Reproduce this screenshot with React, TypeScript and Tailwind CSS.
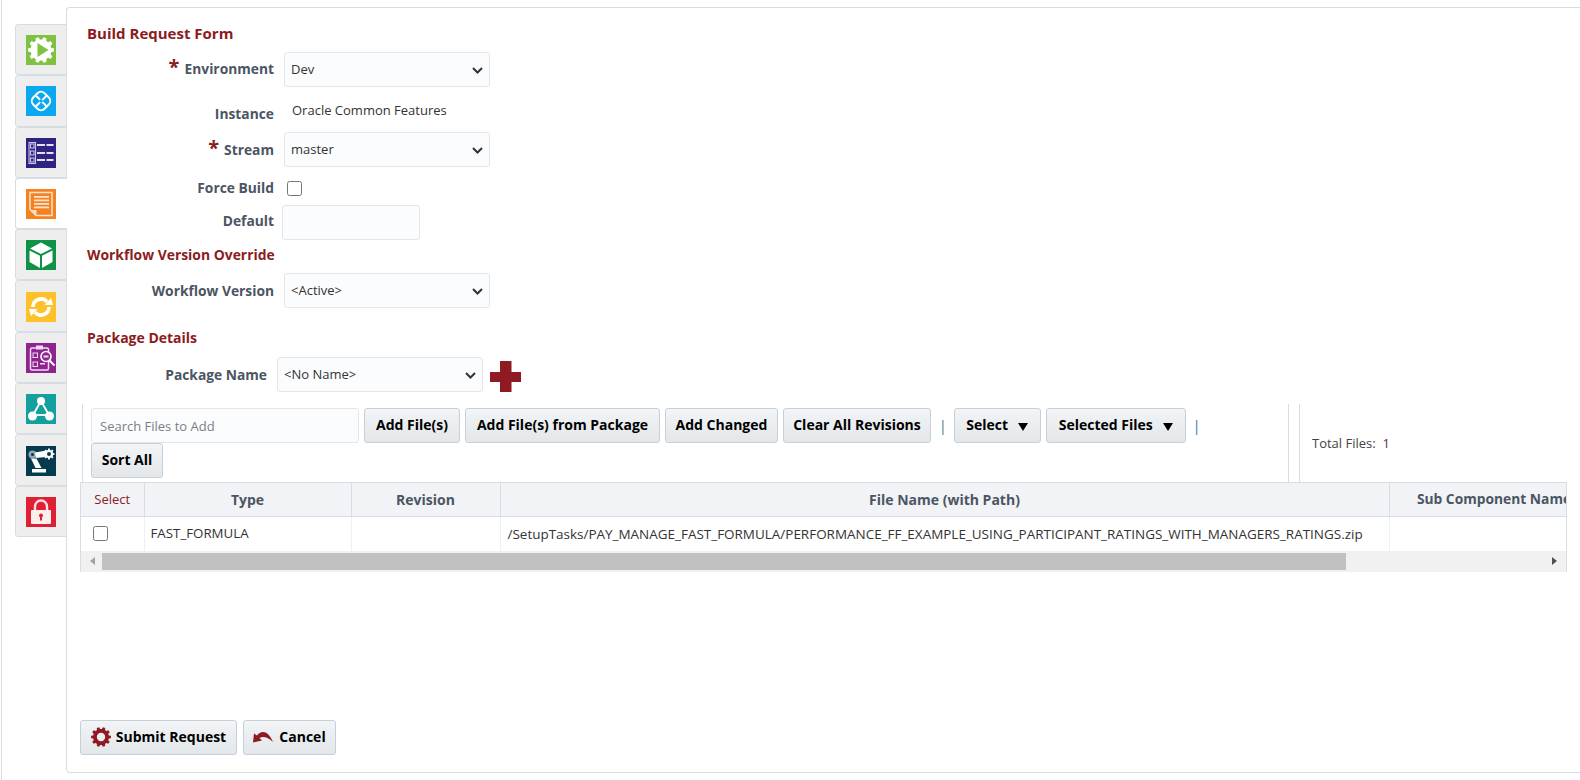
import type { ReactNode } from "react";

const FONT = "font-['Open_Sans','Noto_Sans',sans-serif]";

function gearPath(cx: number, cy: number, outer: number, inner: number, teeth: number) {
    const pts: string[] = [];
    const step = (Math.PI * 2) / teeth;
    for (let i = 0; i < teeth; i++) {
        const a = i * step;
        const list = [
            [a - step * 0.2, outer],
            [a + step * 0.2, outer],
            [a + step * 0.32, inner],
            [a + step * 0.68, inner],
        ];
        for (const [ang, r] of list) {
            pts.push(`${(cx + Math.cos(ang) * r).toFixed(2)} ${(cy + Math.sin(ang) * r).toFixed(2)}`);
        }
    }
    return "M" + pts.join("L") + "Z";
}

function IconBox({ bg, children }: { bg: string; children: ReactNode }) {
    return (
        <svg width="30" height="30" viewBox="0 0 30 30" className="block" style={{ background: bg }}>
            {children}
        </svg>
    );
}

const tabs: { key: string; active?: boolean; icon: ReactNode }[] = [
    {
        key: "run",
        icon: (
            <IconBox bg="#7fc241">
                <path d={gearPath(15, 15, 13, 10.5, 10)} fill="#fff" />
                <path d="M11.5 8 22.500 15 11.5 22z" fill="#7fc241" />
            </IconBox>
        ),
    },
    {
        key: "flow",
        icon: (
            <IconBox bg="#0aa9ef">
                <g fill="none" stroke="#fff" strokeWidth="2" strokeLinejoin="round">
                    <rect x="7" y="7" width="16" height="16" rx="5" transform="rotate(45 15 15)" />
                    <path d="M9.500 9.500C13 12 13 13 15 15s3 2 5.500 5.500" />
                    <path d="M20.500 9.500C18 13 17 13 15 15s-2 3-5.500 5.500" />
                </g>
                <circle cx="15" cy="15" r="1.800" fill="#0aa9ef" />
            </IconBox>
        ),
    },
    {
        key: "list",
        icon: (
            <IconBox bg="#2e2381">
                <g fill="none" stroke="#c9c3ea" strokeWidth="1.100">
                    <rect x="3" y="4.500" width="6.500" height="21" />
                    <rect x="4.500" y="6" width="3.500" height="4" />
                    <rect x="4.500" y="13" width="3.500" height="4" />
                    <rect x="4.500" y="20" width="3.500" height="4" />
                </g>
                <g fill="#e4e1f5">
                    <rect x="11" y="6" width="8" height="2" />
                    <rect x="20.500" y="6" width="7" height="2" />
                    <rect x="11" y="14" width="8" height="2" />
                    <rect x="20.500" y="14" width="7" height="2" />
                    <rect x="11" y="21" width="8" height="2" />
                    <rect x="20.500" y="21" width="7" height="2" />
                </g>
            </IconBox>
        ),
    },
    {
        key: "doc",
        active: true,
        icon: (
            <IconBox bg="#f58220">
                <path d="M4 3.500h22v23H10l-6-6z" fill="none" stroke="#fde3cb" strokeWidth="1.500" />
                <path d="M5 21h5.500v5z" fill="#fde3cb" />
                <g fill="#fde3cb">
                    <rect x="8" y="7" width="15" height="1.800" />
                    <rect x="8" y="10.500" width="15" height="1.800" />
                    <rect x="8" y="14" width="15" height="1.800" />
                    <rect x="8" y="17.500" width="15" height="1.800" />
                </g>
            </IconBox>
        ),
    },
    {
        key: "box",
        icon: (
            <IconBox bg="#0f9247">
                <path d="M15 2.500 26 8.500 15 14 4 8.500z" fill="#fff" />
                <path d="M3.500 10.500 14 15.800V28L3.500 22z" fill="#fff" />
                <path d="M26.500 10.500 16 15.800V28l10.500-6z" fill="#fff" />
            </IconBox>
        ),
    },
    {
        key: "sync",
        icon: (
            <IconBox bg="#fdc12a">
                <g fill="none" stroke="#fff" strokeWidth="3.600">
                    <path d="M7 15a8 8 0 0 1 14-5.300" />
                    <path d="M23 15a8 8 0 0 1-14 5.300" />
                </g>
                <path d="M18.500 13h8.500l-2-7z" fill="#fff" />
                <path d="M11.500 17H3l2 7z" fill="#fff" />
            </IconBox>
        ),
    },
    {
        key: "audit",
        icon: (
            <IconBox bg="#8e2490">
                <rect x="4.500" y="5" width="18" height="22" rx="1.500" fill="none" stroke="#f3dcf3" strokeWidth="1.500" />
                <rect x="10" y="2.500" width="7" height="4" fill="#f3dcf3" />
                <rect x="7" y="10" width="4.500" height="4.500" fill="none" stroke="#f3dcf3" />
                <rect x="7" y="19" width="4.500" height="4.500" fill="none" stroke="#f3dcf3" />
                <rect x="14" y="20" width="5" height="1.500" fill="#f3dcf3" />
                <circle cx="20" cy="13.500" r="5" fill="#8e2490" stroke="#fff" strokeWidth="1.600" />
                <rect x="17.500" y="12.500" width="5" height="2" fill="#f3dcf3" />
                <path d="m23.500 17.500 5 5" stroke="#fff" strokeWidth="2" />
            </IconBox>
        ),
    },
    {
        key: "graph",
        icon: (
            <IconBox bg="#14a09c">
                <g stroke="#fff" strokeWidth="1.800" fill="none">
                    <path d="M15 7 7 21" />
                    <path d="M15 7 23 21" />
                    <path d="M11 21h9" />
                </g>
                <circle cx="15" cy="7" r="4" fill="#fff" />
                <circle cx="6.500" cy="22" r="4.500" fill="#fff" />
                <circle cx="23.500" cy="22" r="4.500" fill="#fff" />
            </IconBox>
        ),
    },
    {
        key: "robot",
        icon: (
            <IconBox bg="#053b4f">
                <circle cx="6.500" cy="8.500" r="4" fill="#8fa7b0" />
                <circle cx="6.500" cy="8.500" r="1.500" fill="#053b4f" />
                <path d="M9 6.500 20 4.500V11L10 12z" fill="#fff" />
                <path d={gearPath(23, 8, 5.500, 4.200, 8)} fill="#fff" />
                <circle cx="23" cy="8" r="2" fill="#053b4f" />
                <path d="M5 12.500h5.500L15.500 22h-6z" fill="#fff" />
                <rect x="6" y="23" width="14" height="3.500" fill="#fff" />
            </IconBox>
        ),
    },
    {
        key: "lock",
        icon: (
            <IconBox bg="#de2032">
                <path d="M9 14V9.500a6 6 0 0 1 12 0V14" fill="none" stroke="#fde" strokeWidth="2.400" />
                <rect x="5" y="13" width="20" height="14" rx="1" fill="#fdeeee" />
                <circle cx="15" cy="18.500" r="2" fill="#de2032" />
                <rect x="14" y="19" width="2" height="4.500" fill="#de2032" />
            </IconBox>
        ),
    },
];

function Label({ w, children, asterisk, className = "" }: { w: string; children: ReactNode; asterisk?: boolean; className?: string }) {
    return (
        <label className={`${w} shrink-0 text-right text-[13.800px] font-bold text-[#4b5563] whitespace-nowrap ${className}`}>
            {asterisk && <span className="mr-[5px] text-[20px] leading-none text-[#8a1c22]">*</span>}
            {children}
        </label>
    );
}

function Heading({ children, className }: { children: ReactNode; className: string }) {
    return <h2 className={`h-[20px] leading-[20px] font-bold text-[#8a1c22] whitespace-nowrap ${className}`}>{children}</h2>;
}

function Select({ value, w }: { value: string; w: string }) {
    return (
        <div className={`relative ${w} shrink-0`}>
            <select
                defaultValue={value}
                className="h-[35px] w-full appearance-none rounded-[3px] border border-[#e2e6ea] bg-[#fbfcfe] pl-[6px] text-[13px] text-[#333]"
            >
                <option>{value}</option>
            </select>
            <svg width="11" height="7" viewBox="0 0 11 7" className="pointer-events-none absolute right-[7px] top-[15px]">
                <path d="M1 1l4.500 4.500L10 1" fill="none" stroke="#333" strokeWidth="2" />
            </svg>
        </div>
    );
}

function Btn({ children, className = "" }: { children: ReactNode; className?: string }) {
    return (
        <button className={`flex h-[35px] items-center justify-center rounded-[3px] border border-[#c5d0da] bg-gradient-to-b from-[#f2f4f6] to-[#e3e7ea] pb-[2px] text-[14px] font-bold text-black whitespace-nowrap ${className}`}>
            {children}
        </button>
    );
}

function Caret() {
    return <span className="ml-[10px] mt-[5px] h-0 w-0 border-x-[5.500px] border-t-[8px] border-x-transparent border-t-black" />;
}

function Check({ className = "" }: { className?: string }) {
    return <input type="checkbox" className={`h-[15px] w-[15px] rounded-[3px] ${className}`} />;
}

export default function App() {
    return (
        <div className={`${FONT} ml-px flex h-[780px] w-[1579px] overflow-hidden border-l border-[#dcdcdc] bg-white pl-[13px]`}>
            {/* Tabs */}
            <div className="mt-[24px] w-[52px] shrink-0">
                {tabs.map((t) => (
                    <div
                        key={t.key}
                        className={`relative flex h-[51.300px] items-center justify-center rounded-l-[3px] border border-[#d5dde5] pr-px pt-px ${t.active ? "z-10 border-r-0 bg-white" : "bg-[#eeeeee]"}`}
                    >
                        {t.icon}
                    </div>
                ))}
            </div>

            {/* Panel */}
            <div className="-ml-px my-[7px] flex min-w-0 flex-1 flex-col rounded-l-[4px] border border-r-0 border-[#d5dde5] pb-[17px]">
                <div className="pl-[20px] pt-[15px]">
                    <Heading className="text-[15px]">Build Request Form</Heading>

                    <div className="mt-[9px] flex items-center gap-[10px]">
                        <Label w="w-[187px]" asterisk className="pb-[2px]">Environment</Label>
                        <Select value="Dev" w="w-[206px]" />
                    </div>
                    <div className="flex h-[45px] gap-[18px]">
                        <div className="pt-[17px]"><Label w="w-[187px] block">Instance</Label></div>
                        <span className="pt-[14px] text-[13px] text-[#333]">Oracle Common Features</span>
                    </div>
                    <div className="flex items-center gap-[10px]">
                        <Label w="w-[187px]" asterisk>Stream</Label>
                        <Select value="master" w="w-[206px]" />
                    </div>
                    <div className="mt-[9px] flex h-[24px] items-center gap-[13px]">
                        <Label w="w-[187px]">Force Build</Label>
                        <Check />
                    </div>
                    <div className="mt-[5px] flex items-center gap-[8px]">
                        <Label w="w-[187px]" className="pb-[2px]">Default</Label>
                        <input className="h-[35px] w-[138px] rounded-[3px] border border-[#e2e6ea] bg-[#fbfcfe]" />
                    </div>
                    <Heading className="mt-[5px] text-[13.900px]">Workflow Version Override</Heading>
                    <div className="mt-[8px] flex items-center gap-[10px]">
                        <Label w="w-[187px]" className="pt-[2px]">Workflow Version</Label>
                        <Select value="<Active>" w="w-[206px]" />
                    </div>

                    <Heading className="mt-[20px] text-[14px]">Package Details</Heading>
                    <div className="mt-[9px] flex items-center gap-[10px]">
                        <Label w="w-[180px]" className="pt-[2px]">Package Name</Label>
                        <Select value="<No Name>" w="w-[206px]" />
                        <svg width="31" height="31" viewBox="0 0 31 31" className="-ml-[3px] mt-[3px]">
                            <path d="M10 0h11.500v11H31v10h-9.500v10H10V21H0V11h10z" fill="#8f1a22" />
                        </svg>
                    </div>
                </div>

                {/* Files */}
                <div className="ml-[13px] mt-[12px] w-[1487px]">
                    <div className="ml-[2px] flex h-[78px]">
                        <div className="flex w-[1207px] flex-wrap content-start items-center gap-x-[5px] border-l border-r border-[#d5dde5] pl-[8px] pr-[30px] pt-[4px]">
                            <input
                                placeholder="Search Files to Add"
                                className="h-[35px] w-[268px] rounded-[3px] border border-[#e2e6ea] bg-[#fbfcfe] pl-[8px] text-[13px] placeholder:text-[#7a7f85]"
                            />
                            <Btn className="w-[96px]">Add File(s)</Btn>
                            <Btn className="w-[195px]">Add File(s) from Package</Btn>
                            <Btn className="w-[113px]">Add Changed</Btn>
                            <Btn className="w-[148px]">Clear All Revisions</Btn>
                            <span className="ml-[3px] mr-[2px] text-[14px] text-[#3d7a78]">|</span>
                            <Btn className="w-[87px]">Select<Caret /></Btn>
                            <Btn className="w-[140px]">Selected Files<Caret /></Btn>
                            <span className="ml-[2px] text-[14px] text-[#2f6fb5]">|</span>
                            <Btn className="w-[72px]">Sort All</Btn>
                        </div>
                        <div className="ml-[10px] flex items-center border-l border-[#d5dde5] pl-[12px] pt-[2px] text-[13px] text-[#444]">
                            Total Files:&nbsp;&nbsp;<span className="text-[#5a2a4a]">1</span>
                        </div>
                    </div>

                    <div className="overflow-hidden border-x border-[#d5dde5]">
                        <table className="w-[1600px] table-fixed border-collapse text-[13px] text-[#333]">
                            <colgroup>
                                <col className="w-[63px]" />
                                <col className="w-[207px]" />
                                <col className="w-[149px]" />
                                <col className="w-[889px]" />
                                <col className="w-[210px]" />
                                <col />
                            </colgroup>
                            <thead>
                                <tr className="h-[34px] border-y border-[#d5dde5] bg-[#f1f3f6] text-[14px] text-[#4b5563]">
                                    <th className="border-r border-[#d5dde5] text-center text-[13px] font-normal text-[#8a1c22]">Select</th>
                                    <th className="border-r border-[#d5dde5] font-bold">Type</th>
                                    <th className="border-r border-[#d5dde5] font-bold">Revision</th>
                                    <th className="border-r border-[#d5dde5] font-bold">File Name (with Path)</th>
                                    <th className="border-r border-[#d5dde5] text-[13.800px] font-bold whitespace-nowrap">Sub Component Name</th>
                                    <th />
                                </tr>
                            </thead>
                            <tbody>
                                <tr className="h-[34px]">
                                    <td className="border-r border-[#eef0f3] pl-[12px]"><Check className="block" /></td>
                                    <td className="border-r border-[#eef0f3] pl-[6px] text-[13.300px]">FAST_FORMULA</td>
                                    <td className="border-r border-[#eef0f3]" />
                                    <td className="border-r border-[#eef0f3] pl-[7px] text-[13.480px] whitespace-nowrap">/SetupTasks/PAY_MANAGE_FAST_FORMULA/PERFORMANCE_FF_EXAMPLE_USING_PARTICIPANT_RATINGS_WITH_MANAGERS_RATINGS.zip</td>
                                    <td />
                                    <td />
                                </tr>
                            </tbody>
                        </table>
                        {/* Scrollbar */}
                        <div className="flex h-[21px] items-center bg-[#f1f1f1]">
                            <span className="ml-[9px] h-0 w-0 border-y-[4px] border-r-[5px] border-y-transparent border-r-[#a3a3a3]" />
                            <div className="ml-[7px] h-[17px] w-[1244px] bg-[#c1c1c1]" />
                            <span className="ml-auto mr-[9px] h-0 w-0 border-y-[4px] border-l-[5px] border-y-transparent border-l-[#505050]" />
                        </div>
                    </div>
                </div>

                {/* Actions */}
                <div className="mt-auto ml-[13px] flex gap-[6px]">
                    <Btn className="w-[157px] gap-[5px]">
                        <svg width="20" height="20" viewBox="0 0 20 20">
                            <path d={gearPath(10, 10, 10, 8, 10)} fill="#8f1a22" />
                            <circle cx="10" cy="10" r="4.200" fill="#eceff1" />
                        </svg>
                        Submit Request
                    </Btn>
                    <Btn className="w-[93px] gap-[6px]">
                        <svg width="20" height="13" viewBox="0 0 20 13">
                            <path d="M0 12.500 1 3.500 4 5.500C8 0 15 0 20 12 15 7 10 6 6.500 8L9 10.500z" fill="#8f1a22" />
                        </svg>
                        Cancel
                    </Btn>
                </div>
            </div>
        </div>
    );
}
